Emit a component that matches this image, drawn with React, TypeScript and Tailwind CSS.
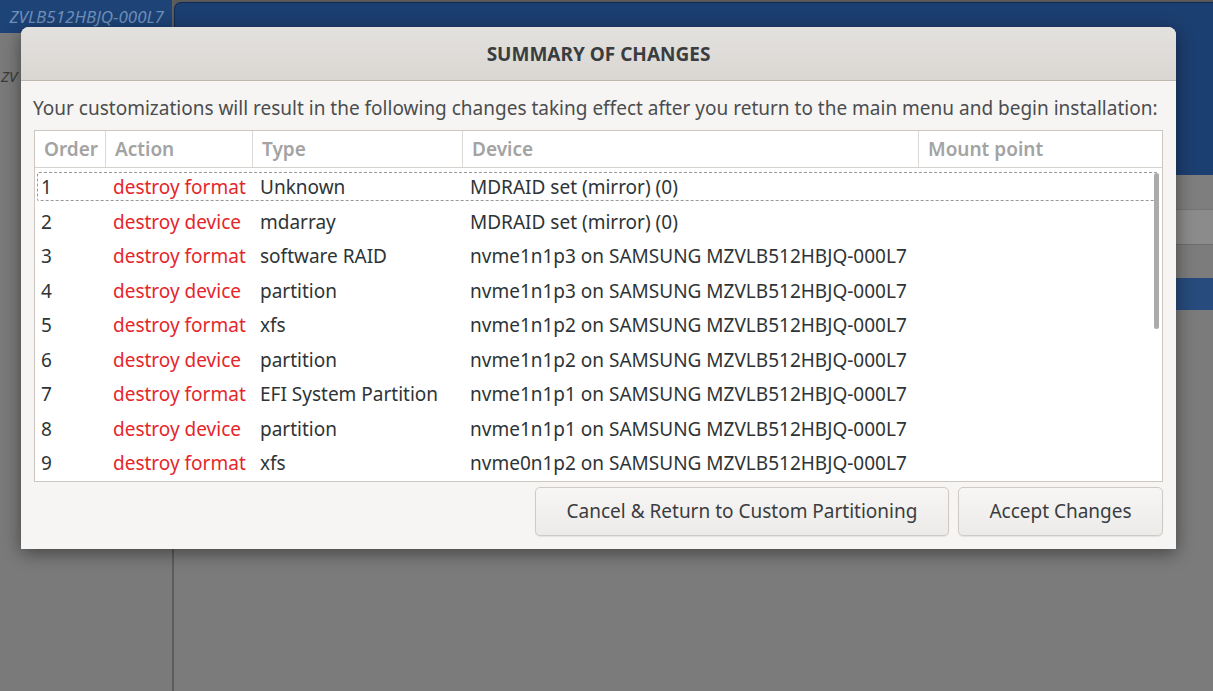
import React from "react";

interface Change {
  order: number;
  action: string;
  type: string;
  device: string;
  mount: string;
}

const changes: Change[] = [
  { order: 1, action: "destroy format", type: "Unknown", device: "MDRAID set (mirror) (0)", mount: "" },
  { order: 2, action: "destroy device", type: "mdarray", device: "MDRAID set (mirror) (0)", mount: "" },
  { order: 3, action: "destroy format", type: "software RAID", device: "nvme1n1p3 on SAMSUNG MZVLB512HBJQ-000L7", mount: "" },
  { order: 4, action: "destroy device", type: "partition", device: "nvme1n1p3 on SAMSUNG MZVLB512HBJQ-000L7", mount: "" },
  { order: 5, action: "destroy format", type: "xfs", device: "nvme1n1p2 on SAMSUNG MZVLB512HBJQ-000L7", mount: "" },
  { order: 6, action: "destroy device", type: "partition", device: "nvme1n1p2 on SAMSUNG MZVLB512HBJQ-000L7", mount: "" },
  { order: 7, action: "destroy format", type: "EFI System Partition", device: "nvme1n1p1 on SAMSUNG MZVLB512HBJQ-000L7", mount: "" },
  { order: 8, action: "destroy device", type: "partition", device: "nvme1n1p1 on SAMSUNG MZVLB512HBJQ-000L7", mount: "" },
  { order: 9, action: "destroy format", type: "xfs", device: "nvme0n1p2 on SAMSUNG MZVLB512HBJQ-000L7", mount: "" },
];

const columns = [
  { label: "Order", width: "w-[71px]" },
  { label: "Action", width: "w-[147px]" },
  { label: "Type", width: "w-[210px]" },
  { label: "Device", width: "w-[456px]" },
  { label: "Mount point", width: "flex-1" },
];

const App: React.FC = () => {
  return (
    <div className="relative w-[1213px] h-[691px] overflow-hidden bg-[#7b7b7b] font-['Noto_Sans',sans-serif]">
      {/* dimmed installer window behind the dialog */}
      <div className="flex h-full">
        <div className="w-[172px] flex flex-col bg-[#7a7a7a]">
          <div className="h-[33px] bg-[#1d4377] flex items-center justify-end overflow-hidden pr-[8px]">
            <span className="italic text-[#6f8fbb] text-[17px] whitespace-nowrap">ZVLB512HBJQ-000L7</span>
          </div>
          <div className="h-[54px] flex items-end overflow-hidden pl-[1px]">
            <span className="italic text-[#3a3a3a] text-[15px] whitespace-nowrap">ZV</span>
          </div>
        </div>
        <div className="w-[2px] bg-[#5d5d5d]" />
        <div className="flex-1 flex flex-col bg-[#5a5a5a] pt-[2px]">
          <div className="h-[173px] bg-[#1c3f71] rounded-tl-[7px] border-t border-l border-[#0f2a52]" />
          <div className="h-[35px] bg-[#7e7e7e] border-b border-[#747474]" />
          <div className="h-[35px] bg-[#8b8b8b] border-b border-[#6e6e6e]" />
          <div className="h-[33px] bg-[#7c7c7c]" />
          <div className="h-[32px] bg-[#264b7c]" />
          <div className="flex-1 bg-[#7b7b7b]" />
        </div>
      </div>

      {/* dialog */}
      <div className="absolute left-[21px] top-[27px] w-[1155px] h-[522px] flex flex-col bg-[#f6f5f4] rounded-t-[8px] shadow-[0_4px_18px_rgba(0,0,0,0.45)]">
        <div className="h-[54px] flex items-center justify-center rounded-t-[8px] bg-gradient-to-b from-[#e3e1de] to-[#dad7d3] border-b border-[#bfb8b1]">
          <span className="font-bold text-[19px] text-[#3a3d3f] pt-[2px]">SUMMARY OF CHANGES</span>
        </div>
        <div className="flex flex-col px-[12px] pt-[14px]">
          <p className="text-[19px] text-[#4b4d4f] leading-[26px] whitespace-nowrap">
            Your customizations will result in the following changes taking effect after you return to the main menu and begin installation:
          </p>
          <div className="relative mt-[9px] ml-[1px] w-[1129px] h-[352px] bg-white border border-[#cdc7c2] flex flex-col">
            <div className="flex h-[37px] border-b border-[#d6d2ce] shrink-0">
              {columns.map((c, i) => (
                <div
                  key={c.label}
                  className={`${c.width} flex items-center pl-[9px] pt-[1px] text-[19px] font-semibold text-[#a3a3a3] ${i < 4 ? "border-r border-[#dcd8d4]" : ""}`}
                >
                  {c.label}
                </div>
              ))}
            </div>
            <div className="flex flex-col pt-[2px]">
              {changes.map((r) => (
                <div key={r.order} className="flex h-[34.5px] items-center text-[19px] text-[#2e3436]">
                  <div className="w-[71px] pl-[6px]">{r.order}</div>
                  <div className="w-[147px] pl-[7px] text-[#e5262b] whitespace-nowrap">{r.action}</div>
                  <div className="w-[210px] pl-[7px] whitespace-nowrap">{r.type}</div>
                  <div className="w-[456px] pl-[7px] whitespace-nowrap">{r.device}</div>
                  <div className="flex-1 pl-[7px]">{r.mount}</div>
                </div>
              ))}
            </div>
            {/* focus ring on the first row */}
            <div className="absolute left-[2px] top-[41px] w-[1121px] h-[29px] border border-dashed border-[#9a9a9a] rounded-[2px]" />
            {/* scrollbar */}
            <div className="absolute right-[3px] top-[42px] w-[5px] h-[156px] rounded-full bg-[#ababab]" />
          </div>
          <div className="flex justify-end gap-[9px] mt-[5px] w-[1130px]">
            <button className="w-[414px] h-[49px] rounded-[5px] border border-[#cfcac5] bg-gradient-to-b from-[#f7f6f5] to-[#edebe9] text-[19px] text-[#3a3d3f] shadow-[0_1px_1px_rgba(0,0,0,0.08)]">
              Cancel &amp; Return to Custom Partitioning
            </button>
            <button className="w-[205px] h-[49px] rounded-[5px] border border-[#cfcac5] bg-gradient-to-b from-[#f7f6f5] to-[#edebe9] text-[19px] text-[#3a3d3f] shadow-[0_1px_1px_rgba(0,0,0,0.08)]">
              Accept Changes
            </button>
          </div>
        </div>
      </div>
    </div>
  );
};

export default App;
